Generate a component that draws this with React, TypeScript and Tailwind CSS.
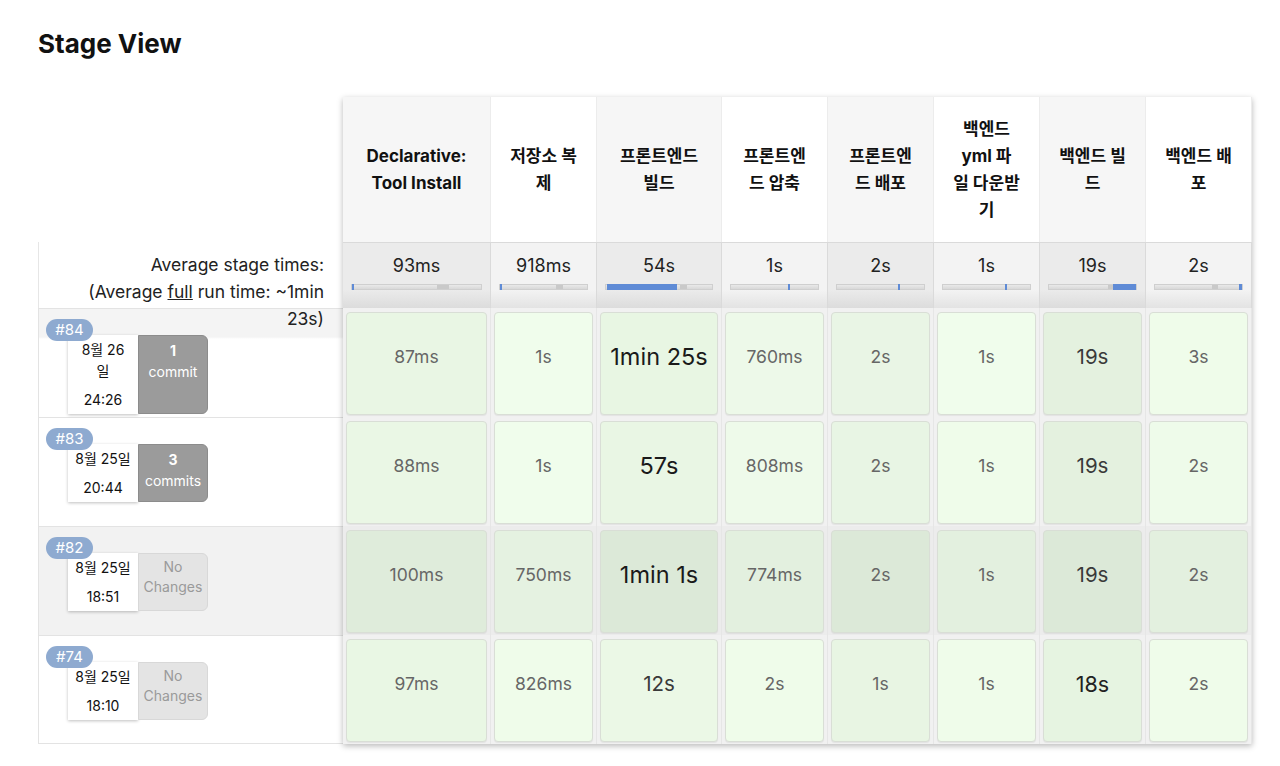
import React from 'react'

type Col = {
  name: string[]
  avg: string
  bar: [number, number]
  tick: [number, number]
}

const cols: Col[] = [
  { name: ['Declarative:', 'Tool Install'], avg: '93ms', bar: [0, 1.5], tick: [66, 9] },
  { name: ['저장소 복', '제'], avg: '918ms', bar: [0, 2], tick: [64, 8] },
  { name: ['프론트엔드', '빌드'], avg: '54s', bar: [1, 66], tick: [70, 6] },
  { name: ['프론트엔', '드 압축'], avg: '1s', bar: [66, 2], tick: [0, 0] },
  { name: ['프론트엔', '드 배포'], avg: '2s', bar: [70, 2.5], tick: [0, 0] },
  { name: ['백엔드', 'yml 파', '일 다운받', '기'], avg: '1s', bar: [71, 2], tick: [0, 0] },
  { name: ['백엔드 빌', '드'], avg: '19s', bar: [74, 26], tick: [68, 6] },
  { name: ['백엔드 배', '포'], avg: '2s', bar: [97, 2.5], tick: [66, 7] },
]

type Cell = { t: string; bg: string; size: 'sm' | 'md' | 'lg' | 'xl' }

const runs: {
  id: string
  date: string[]
  time: string
  changes: string[] | null
  hover?: boolean
  cells: Cell[]
}[] = [
  {
    id: '#84',
    date: ['8월 26', '일'],
    time: '24:26',
    changes: ['1', 'commit'],
    cells: [
      { t: '87ms', bg: 'bg-[#e9f6e4]', size: 'sm' },
      { t: '1s', bg: 'bg-[#f0fdec]', size: 'sm' },
      { t: '1min 25s', bg: 'bg-[#e8f6e3]', size: 'xl' },
      { t: '760ms', bg: 'bg-[#edf9e9]', size: 'sm' },
      { t: '2s', bg: 'bg-[#e9f5e5]', size: 'sm' },
      { t: '1s', bg: 'bg-[#f0fdec]', size: 'sm' },
      { t: '19s', bg: 'bg-[#e4f1df]', size: 'md' },
      { t: '3s', bg: 'bg-[#effcea]', size: 'sm' },
    ],
  },
  {
    id: '#83',
    date: ['8월 25일'],
    time: '20:44',
    changes: ['3', 'commits'],
    cells: [
      { t: '88ms', bg: 'bg-[#eaf7e5]', size: 'sm' },
      { t: '1s', bg: 'bg-[#f0fdec]', size: 'sm' },
      { t: '57s', bg: 'bg-[#e9f6e4]', size: 'xl' },
      { t: '808ms', bg: 'bg-[#eefaea]', size: 'sm' },
      { t: '2s', bg: 'bg-[#e8f5e4]', size: 'sm' },
      { t: '1s', bg: 'bg-[#effcea]', size: 'sm' },
      { t: '19s', bg: 'bg-[#e4f1df]', size: 'md' },
      { t: '2s', bg: 'bg-[#eefbea]', size: 'sm' },
    ],
  },
  {
    id: '#82',
    date: ['8월 25일'],
    time: '18:51',
    changes: null,
    hover: true,
    cells: [
      { t: '100ms', bg: 'bg-[#dfecdb]', size: 'sm' },
      { t: '750ms', bg: 'bg-[#e5f2e1]', size: 'sm' },
      { t: '1min 1s', bg: 'bg-[#dce9d8]', size: 'xl' },
      { t: '774ms', bg: 'bg-[#e3f0df]', size: 'sm' },
      { t: '2s', bg: 'bg-[#dce9d8]', size: 'sm' },
      { t: '1s', bg: 'bg-[#e3f0df]', size: 'sm' },
      { t: '19s', bg: 'bg-[#dce9d8]', size: 'md' },
      { t: '2s', bg: 'bg-[#e3f0df]', size: 'sm' },
    ],
  },
  {
    id: '#74',
    date: ['8월 25일'],
    time: '18:10',
    changes: null,
    cells: [
      { t: '97ms', bg: 'bg-[#e9f7e4]', size: 'sm' },
      { t: '826ms', bg: 'bg-[#effcea]', size: 'sm' },
      { t: '12s', bg: 'bg-[#ebf8e6]', size: 'md' },
      { t: '2s', bg: 'bg-[#effcea]', size: 'sm' },
      { t: '1s', bg: 'bg-[#e8f5e3]', size: 'sm' },
      { t: '1s', bg: 'bg-[#effcea]', size: 'sm' },
      { t: '18s', bg: 'bg-[#e6f4e1]', size: 'lg' },
      { t: '2s', bg: 'bg-[#effcea]', size: 'sm' },
    ],
  },
]

const textSize = {
  sm: 'text-[17.5px] text-[#666]',
  md: 'text-[20.5px] text-[#3a3a3a]',
  lg: 'text-[21.5px] text-[#222]',
  xl: 'text-[23.5px] text-[#1a1a1a]',
}

function Bar({ col }: { col: Col }) {
  return (
    <div className="relative mx-[8px] mt-[5px] h-[6px] border border-[#cfcfcf] bg-[linear-gradient(to_bottom,#e9e9e9,#d8d8d8)]">
      {col.tick[1] > 0 && (
        <div
          className="absolute top-0 bottom-0 bg-[#c9c9c9]"
          style={{ left: `${col.tick[0]}%`, width: `${col.tick[1]}%` }}
        />
      )}
      <div
        className="absolute -top-px -bottom-px min-w-[2px] bg-[#5f8bd6]"
        style={{ left: `${col.bar[0]}%`, width: `${col.bar[1]}%` }}
      />
    </div>
  )
}

export default function App() {
  return (
    <main
      className="min-h-screen bg-white pl-[38px] text-[#222]"
      style={{ fontFamily: 'Inter, "Noto Sans CJK KR", sans-serif' }}
    >
      <h1 className="pt-[28px] text-[26px] font-bold leading-[32px] text-[#111]">Stage View</h1>

      <div className="mt-[37px] flex">
        {/* Left: run list */}
        <div className="w-[305px] shrink-0">
          <div className="h-[145px]" />
          <div className="h-[66px] border-l border-[#e6e6e6] pr-[19px] pt-[9px] text-right text-[17.5px] leading-[27px]">
            <div>Average stage times:</div>
            <div>
              (Average <span className="underline">full</span> run time: ~1min
            </div>
            <div>23s)</div>
          </div>
          {runs.map((r, i) => (
            <div
              key={r.id}
              className={
                'h-[109px] border-t border-l border-[#e3e3e3] pl-[7px] pt-[10px] ' +
                (r.hover ? 'bg-[#f2f2f2] ' : '') +
                (i === 0 ? 'bg-[linear-gradient(to_bottom,#f4f4f4,#f4f4f4_28px,#ffffff_30px)] ' : '') +
                (i === runs.length - 1 ? 'border-b' : '')
              }
            >
              <div className="relative z-10 flex h-[22px] w-[47px] items-center justify-center rounded-full bg-[#8eaad0] text-[15px] text-white">
                {r.id}
              </div>
              <div className="-mt-[6px] ml-[22px] flex">
                <div className="w-[70px] bg-white py-[4px] text-center text-[14px] leading-[21px] text-[#111] shadow-[0_1px_3px_rgba(0,0,0,0.25)]">
                  <div>
                    {r.date.map((d) => (
                      <div key={d}>{d}</div>
                    ))}
                  </div>
                  <div className="mt-[8px]">{r.time}</div>
                </div>
                {r.changes ? (
                  <div className="w-[70px] rounded-r-[6px] border border-[#8c8c8c] bg-[#9b9b9b] pt-[4px] text-center text-[14px] leading-[21px] text-white">
                    <div className="font-bold">{r.changes[0]}</div>
                    <div>{r.changes[1]}</div>
                  </div>
                ) : (
                  <div className="w-[70px] rounded-r-[6px] border border-[#d8d8d8] bg-[#e4e4e4] pt-[3px] text-center text-[14px] leading-[20px] text-[#9a9a9a]">
                    <div>No</div>
                    <div>Changes</div>
                  </div>
                )}
              </div>
            </div>
          ))}
        </div>

        {/* Right: stage table */}
        <div className="grid w-[909px] shrink-0 grid-cols-[148px_106px_125px_106px_106px_106px_106px_106px] shadow-[0_2px_6px_rgba(0,0,0,0.28)]">
          {cols.map((c, i) => (
            <div
              key={'h' + i}
              className={
                'flex h-[145px] flex-col items-center justify-center border-r border-[#ececec] text-center text-[17px] font-bold leading-[27px] text-[#111] ' +
                (i % 2 === 0 ? 'bg-[#f6f6f6]' : 'bg-white')
              }
            >
              {c.name.map((n) => (
                <div key={n} className="whitespace-nowrap">
                  {n}
                </div>
              ))}
            </div>
          ))}
          {cols.map((c, i) => (
            <div
              key={'a' + i}
              className={
                'h-[66px] border-t border-r border-[#dadada] pt-[9px] ' +
                (i % 2 === 0
                  ? 'bg-[linear-gradient(to_bottom,#ebebeb,#ebebeb_72%,#dcdcdc)]'
                  : 'bg-[linear-gradient(to_bottom,#f3f3f3,#f3f3f3_72%,#e3e3e3)]')
              }
            >
              <div className="text-center text-[18px] leading-[27px] text-[#222]">{c.avg}</div>
              <Bar col={c} />
            </div>
          ))}
          {runs.map((r) =>
            r.cells.map((cell, i) => (
              <div
                key={r.id + i}
                className={
                  'h-[109px] border-r border-[#e6e6e6] px-[3px] pt-[4px] pb-[2px] ' +
                  (r.hover ? 'bg-[#ececec]' : 'bg-[#f1f1f1]')
                }
              >
                <div
                  className={
                    'flex h-full items-center justify-center rounded-[4px] border border-[#d9ded6] pb-[13px] shadow-[0_1px_1px_rgba(0,0,0,0.06)] ' +
                    cell.bg
                  }
                >
                  <span className={textSize[cell.size]}>{cell.t}</span>
                </div>
              </div>
            ))
          )}
        </div>
      </div>
    </main>
  )
}
